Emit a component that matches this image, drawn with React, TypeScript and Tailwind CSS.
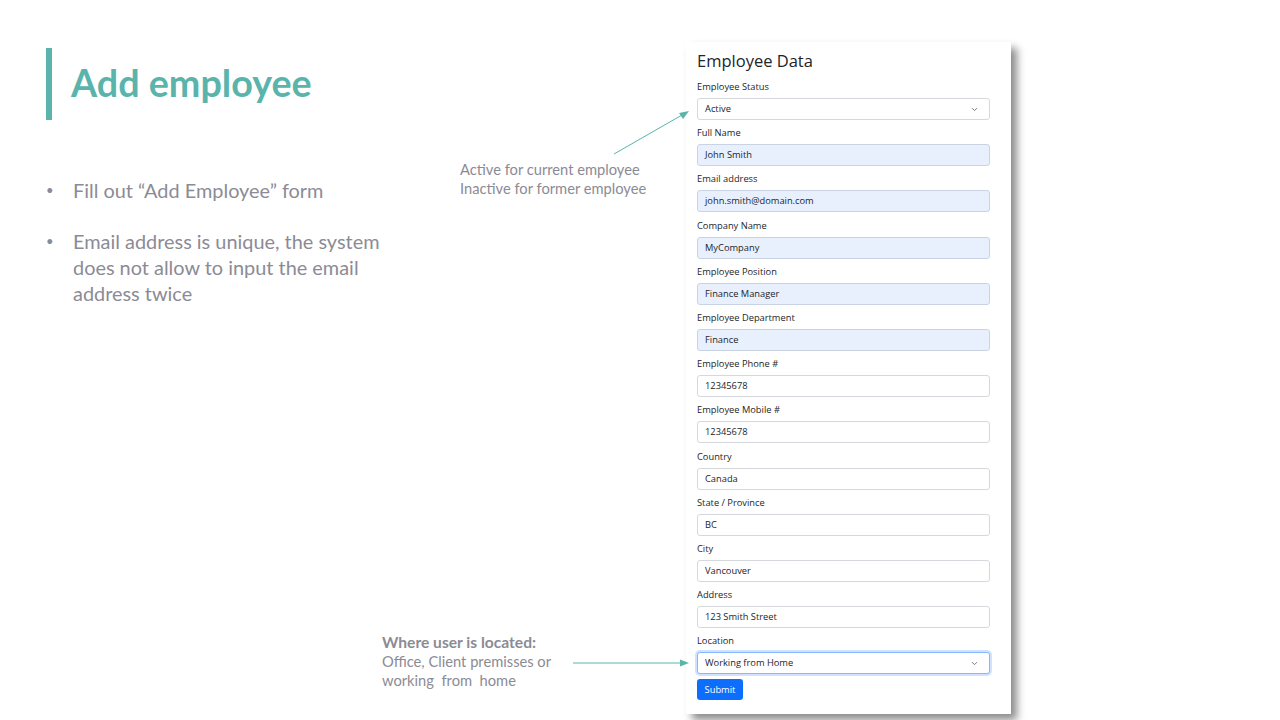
import { ChevronDown } from 'lucide-react';

type Field = {
  label: string;
  value: string;
  kind: 'select' | 'filled' | 'plain';
  focused?: boolean;
};

const FIELDS: Field[] = [
  { label: 'Employee Status', value: 'Active', kind: 'select' },
  { label: 'Full Name', value: 'John Smith', kind: 'filled' },
  { label: 'Email address', value: 'john.smith@domain.com', kind: 'filled' },
  { label: 'Company Name', value: 'MyCompany', kind: 'filled' },
  { label: 'Employee Position', value: 'Finance Manager', kind: 'filled' },
  { label: 'Employee Department', value: 'Finance', kind: 'filled' },
  { label: 'Employee Phone #', value: '12345678', kind: 'plain' },
  { label: 'Employee Mobile #', value: '12345678', kind: 'plain' },
  { label: 'Country', value: 'Canada', kind: 'plain' },
  { label: 'State / Province', value: 'BC', kind: 'plain' },
  { label: 'City', value: 'Vancouver', kind: 'plain' },
  { label: 'Address', value: '123 Smith Street', kind: 'plain' },
  { label: 'Location', value: 'Working from Home', kind: 'select', focused: true },
];

function FormField({ field }: { field: Field }) {
  const box =
    field.kind === 'filled'
      ? 'bg-[#e8f0fe] border-[#c9d3e3]'
      : field.focused
        ? 'bg-white border-[#86b7fe] shadow-[0_0_0_2px_rgba(13,110,253,0.2)]'
        : 'bg-white border-[#d5d9de]';

  return (
    <div className="mb-[5.2px]">
      <div className="h-[14px] leading-[16px] text-[9.3px] text-[#212529] mb-[5px]">{field.label}</div>
      <div className={`h-[22px] rounded-[3px] border ${box} flex items-center justify-between pl-[7px] pr-[10px]`}>
        <span className="text-[9.3px] text-[#212529]">{field.value}</span>
        {field.kind === 'select' ? <ChevronDown size={9} strokeWidth={2} className="text-[#555]" /> : null}
      </div>
    </div>
  );
}

export default function App() {
  return (
    <div className="w-[1280px] h-[720px] bg-white relative overflow-hidden flex font-['Open_Sans',sans-serif]">
      {/* slide text */}
      <div className="w-[450px] pl-[46px] pt-[48px] font-['Lato',sans-serif]">
        <div className="flex items-center h-[72px]">
          <div className="w-[6px] h-[72px] bg-[#5ab4ac]" />
          <h1 className="ml-[19px] text-[37.7px] font-bold text-[#5ab4ac] leading-none -mt-[2px]">Add employee</h1>
        </div>
        <ul className="mt-[57px] text-[19.9px] text-[#8b8b95] leading-[26px]">
          <li className="flex">
            <span className="w-[27px] text-[13px]">•</span>
            <span>Fill out “Add Employee” form</span>
          </li>
          <li className="flex mt-[25px]">
            <span className="w-[27px] text-[13px]">•</span>
            <span className="w-[320px]">Email address is unique, the system does not allow to input the email address twice</span>
          </li>
        </ul>
      </div>

      {/* annotations */}
      <div className="w-[236px] relative font-['Lato',sans-serif] text-[#8b8b95]">
        <div className="absolute left-[10px] top-[160px] text-[14.7px] leading-[19px] whitespace-nowrap">
          <div>Active for current employee</div>
          <div>Inactive for former employee</div>
        </div>
        <div className="absolute left-[-68px] top-[633px] text-[14.7px] leading-[19px] whitespace-nowrap">
          <div className="font-bold text-[15.6px]">Where user is located:</div>
          <div>Office, Client premisses or</div>
          <div>working&nbsp; from&nbsp; home</div>
        </div>
      </div>

      {/* form card */}
      <div className="mt-[42px] w-[325px] h-[672px] bg-white shadow-[6px_6px_8px_rgba(0,0,0,0.45)] pl-[11px] pr-[21px] pt-[8px]">
        <h2 className="h-[22px] leading-[22px] text-[16.5px] font-medium text-[#212529] mb-[7px]">Employee Data</h2>
        {FIELDS.map((f) => (
          <FormField key={f.label} field={f} />
        ))}
        <button className="block mt-[1px] w-[46px] h-[21px] rounded-[3px] bg-[#0d6efd] text-white text-[9.3px]">Submit</button>
      </div>

      {/* arrows */}
      <svg className="absolute left-0 top-0 pointer-events-none" width="1280" height="720">
        <line x1="614" y1="154" x2="682" y2="115" stroke="#5ab4ac" strokeWidth="1" />
        <polygon points="689,111 679,113 683,119" fill="#5ab4ac" />
        <line x1="573" y1="663" x2="682" y2="663" stroke="#5ab4ac" strokeWidth="1" />
        <polygon points="689,663 680,659.5 680,666.5" fill="#5ab4ac" />
      </svg>
    </div>
  );
}
